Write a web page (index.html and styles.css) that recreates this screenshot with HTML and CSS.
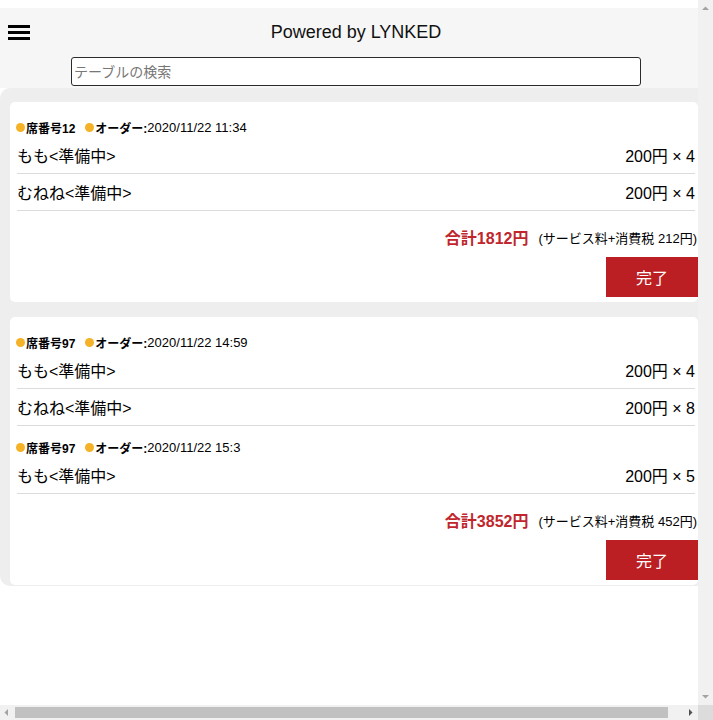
FILE: index.html
```html
<!DOCTYPE html>
<html lang="ja">
<head>
<meta charset="utf-8">
<title>Powered by LYNKED</title>
<link rel="stylesheet" href="styles.css">
</head>
<body>
<div class="app">
  <header class="header">
    <div class="topbar">
      <button class="menu" aria-label="menu"><span></span><span></span><span></span></button>
      <h1 class="title">Powered by LYNKED</h1>
      <div class="spacer"></div>
    </div>
    <div class="search-wrap">
      <input class="search" type="text" placeholder="テーブルの検索">
    </div>
  </header>
  <main class="board">
    <section class="card">
      <div class="order">
        <div class="meta"><span class="dot"></span><b class="seat">席番号12</b><span class="dot"></span><b class="label">オーダー:</b><span class="time">2020/11/22 11:34</span></div>
        <div class="item"><span>もも&lt;準備中&gt;</span><span class="price">200円 × 4</span></div>
        <div class="item"><span>むねね&lt;準備中&gt;</span><span class="price">200円 × 4</span></div>
      </div>
      <div class="footer">
        <div class="total"><strong class="sum">合計1812円</strong><span class="tax">(サービス料+消費税 212円)</span></div>
        <button class="done">完了</button>
      </div>
    </section>
    <section class="card">
      <div class="order">
        <div class="meta"><span class="dot"></span><b class="seat">席番号97</b><span class="dot"></span><b class="label">オーダー:</b><span class="time">2020/11/22 14:59</span></div>
        <div class="item"><span>もも&lt;準備中&gt;</span><span class="price">200円 × 4</span></div>
        <div class="item"><span>むねね&lt;準備中&gt;</span><span class="price">200円 × 8</span></div>
      </div>
      <div class="order">
        <div class="meta"><span class="dot"></span><b class="seat">席番号97</b><span class="dot"></span><b class="label">オーダー:</b><span class="time">2020/11/22 15:3</span></div>
        <div class="item"><span>もも&lt;準備中&gt;</span><span class="price">200円 × 5</span></div>
      </div>
      <div class="footer">
        <div class="total"><strong class="sum">合計3852円</strong><span class="tax">(サービス料+消費税 452円)</span></div>
        <button class="done">完了</button>
      </div>
    </section>
  </main>
</div>

<div class="vscroll" aria-hidden="true">
  <svg class="sb-btn" width="15" height="15" viewBox="0 0 15 15"><polygon points="4,10 11,10 7.5,6.5" fill="#a3a3a3"/></svg>
  <svg class="sb-btn" width="15" height="15" viewBox="0 0 15 15"><polygon points="4,5 11,5 7.5,8.5" fill="#a3a3a3"/></svg>
</div>
<div class="hscroll" aria-hidden="true">
  <svg class="sb-btn" width="15" height="15" viewBox="0 0 15 15"><polygon points="8,4 8,11 4.5,7.5" fill="#a3a3a3"/></svg>
  <span class="thumb"></span>
  <svg class="sb-btn" width="15" height="15" viewBox="0 0 15 15"><polygon points="6,4 6,11 9.5,7.5" fill="#505050"/></svg>
</div>
<div class="sb-corner" aria-hidden="true"></div>
</body>
</html>
```
FILE: styles.css
```css
html {
  overflow-y: scroll;
}
body {
  margin: 0;
  padding-top: 8px;
  background: #ffffff;
  font-family: "Liberation Sans", "Noto Sans CJK JP", sans-serif;
  color: #000;
}
.app {
  width: 714px;
}
.header {
  width: 712px;
  background: #f6f6f6;
  padding-bottom: 2px;
}
.topbar {
  height: 48px;
  display: grid;
  grid-template-columns: 1fr auto 1fr;
  align-items: center;
}
.menu {
  justify-self: start;
  display: flex;
  flex-direction: column;
  gap: 3px;
  width: 22px;
  padding: 0;
  margin: 0 0 0 8px;
  border: 0;
  background: transparent;
}
.menu span {
  display: block;
  width: 22px;
  height: 3px;
  background: #000;
}
.title {
  margin: 0;
  font-size: 18px;
  font-weight: normal;
  color: #111;
  line-height: 20px;
}
.search-wrap {
  display: flex;
  justify-content: center;
  padding-top: 1px;
}
.search {
  width: 570px;
  height: 29px;
  box-sizing: border-box;
  margin: 0;
  padding: 0 2px;
  border: 1px solid #2b2b2b;
  border-radius: 3px;
  background: #fff;
  font-family: "Liberation Sans", "Noto Sans CJK JP", sans-serif;
  font-size: 14px;
}
.search::placeholder {
  color: #777;
}
.board {
  background: #eeeeee;
  border-radius: 10px 0 0 10px;
  padding: 14px 16px 1px 10px;
}
.card {
  background: #fff;
  border-radius: 5px;
  padding: 4px 0 5px 7px;
  margin-bottom: 15px;
}
.card:last-child {
  margin-bottom: 0;
}
.order {
  padding-top: 11px;
  margin-right: 3px;
}
.meta {
  height: 20px;
  display: flex;
  align-items: center;
  font-size: 13px;
  white-space: nowrap;
}
.dot {
  width: 9px;
  height: 9px;
  border-radius: 50%;
  background: #f5b127;
  margin-left: -1px;
  margin-right: 1px;
}
.seat {
  font-size: 12px;
  margin-right: 11px;
}
.label {
  font-size: 12px;
}
.time {
  font-size: 13px;
}
.item {
  height: 36px;
  display: flex;
  justify-content: space-between;
  align-items: center;
  border-bottom: 1px solid #dcdcdc;
  font-size: 16px;
}
.price {
  font-size: 16px;
}
.footer {
  display: flex;
  flex-direction: column;
  align-items: flex-end;
  padding-top: 16px;
}
.total {
  height: 20px;
  display: flex;
  align-items: center;
  margin-right: 1px;
  white-space: nowrap;
}
.sum {
  font-size: 16px;
  color: #c0262c;
}
.tax {
  font-size: 13px;
  margin-left: 10px;
}
.done {
  margin-top: 10px;
  width: 92px;
  height: 40px;
  border: 0;
  border-radius: 0;
  background: #bb1f24;
  color: #fff;
  font-family: "Liberation Sans", "Noto Sans CJK JP", sans-serif;
  font-size: 16px;
  padding: 0;
}

/* browser scrollbars as seen in the reference */
.vscroll {
  position: fixed;
  top: 0;
  right: 0;
  bottom: 15px;
  width: 15px;
  background: #f1f1f1;
  display: flex;
  flex-direction: column;
  justify-content: space-between;
}
.hscroll {
  position: fixed;
  left: 0;
  right: 15px;
  bottom: 0;
  height: 15px;
  background: #f1f1f1;
  display: flex;
  align-items: center;
}
.sb-btn {
  display: block;
  flex: none;
}
.thumb {
  width: 653px;
  height: 11px;
  background: #c1c1c1;
  margin-right: auto;
}
.sb-corner {
  position: fixed;
  right: 0;
  bottom: 0;
  width: 15px;
  height: 15px;
  background: #dcdcdc;
}
```
